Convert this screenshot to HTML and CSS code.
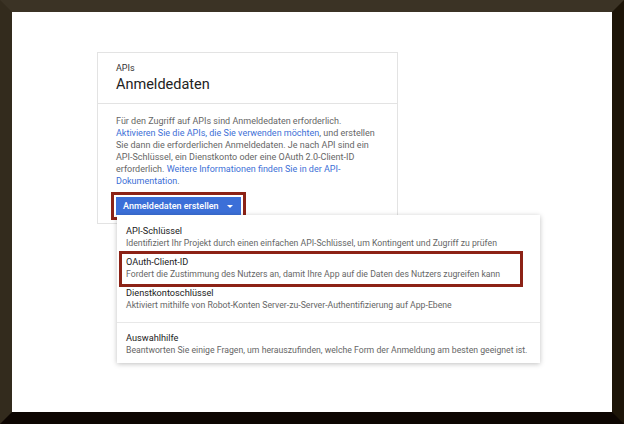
FILE: index.html
```
<!DOCTYPE html>
<html lang="de">
<head>
    <meta charset="UTF-8">
    <title>Anmeldedaten</title>
    <link rel="stylesheet" href="styles.css">
</head>
<body>
    <div class="frame">
        <div class="card">
            <div class="card-head">
                <div class="kicker">APIs</div>
                <div class="title">Anmeldedaten</div>
            </div>
            <div class="card-body">
                <p class="intro">Für den Zugriff auf APIs sind Anmeldedaten erforderlich. <a href="#">Aktivieren Sie die APIs, die Sie verwenden möchten</a>, und erstellen Sie dann die erforderlichen Anmeldedaten. Je nach API sind ein API-Schlüssel, ein Dienstkonto oder eine OAuth 2.0-Client-ID erforderlich. <a href="#">Weitere Informationen finden Sie in der API-Dokumentation</a>.</p>
                <div class="create-wrap">
                    <button class="create-btn">Anmeldedaten erstellen <span class="caret"></span></button>
                    <div class="menu">
                        <div class="menu-group">
                            <div class="menu-item">
                                <div class="item-title">API-Schlüssel</div>
                                <div class="item-desc">Identifiziert Ihr Projekt durch einen einfachen API-Schlüssel, um Kontingent und Zugriff zu prüfen</div>
                            </div>
                            <div class="menu-item marked">
                                <div class="item-title">OAuth-Client-ID</div>
                                <div class="item-desc">Fordert die Zustimmung des Nutzers an, damit Ihre App auf die Daten des Nutzers zugreifen kann</div>
                            </div>
                            <div class="menu-item">
                                <div class="item-title">Dienstkontoschlüssel</div>
                                <div class="item-desc">Aktiviert mithilfe von Robot-Konten Server-zu-Server-Authentifizierung auf App-Ebene</div>
                            </div>
                        </div>
                        <div class="menu-group last">
                            <div class="menu-item">
                                <div class="item-title">Auswahlhilfe</div>
                                <div class="item-desc">Beantworten Sie einige Fragen, um herauszufinden, welche Form der Anmeldung am besten geeignet ist.</div>
                            </div>
                        </div>
                    </div>
                </div>
            </div>
        </div>
    </div>
</body>
</html>
```

FILE: styles.css
```
html, body {
    margin: 0;
    padding: 0;
    background: #fff;
    font-family: Roboto, "Liberation Sans", Arial, sans-serif;
}
.frame {
    width: 624px;
    height: 424px;
    box-sizing: border-box;
    border-style: solid;
    border-width: 12px;
    border-top-color: #3b3325;
    border-left-color: #332b1d;
    border-right-color: #1d1508;
    border-bottom-color: #0d0602;
    background: #fff;
    overflow: hidden;
}
.card {
    width: 301px;
    box-sizing: border-box;
    margin: 40px 0 0 85px;
    border: 1px solid #e3e3e3;
    background: #fff;
}
.card-head {
    padding: 9px 18px 9px;
    border-bottom: 1px solid #e3e3e3;
}
.kicker {
    font-size: 9px;
    line-height: 12px;
    color: #333;
}
.title {
    font-size: 14.5px;
    line-height: 18px;
    color: #222;
    margin-top: 2px;
}
.card-body {
    padding: 11px 18px 8px;
}
.intro {
    margin: 0;
    font-size: 9px;
    line-height: 12px;
    color: #666;
}
.intro a {
    color: #3d6fd6;
    text-decoration: none;
}
.create-wrap {
    position: relative;
    margin-top: 10px;
    display: inline-block;
}
.create-btn {
    display: flex;
    align-items: center;
    gap: 8px;
    height: 18px;
    padding: 0 8px 0 7px;
    border: none;
    border-radius: 0;
    background: #3b6fd8;
    color: #fff;
    font-family: inherit;
    font-size: 9px;
    font-weight: 500;
    outline: 3px solid #8c2216;
    outline-offset: 2px;
}
.caret {
    width: 0;
    height: 0;
    border-left: 3px solid transparent;
    border-right: 3px solid transparent;
    border-top: 3px solid #fff;
}
.menu {
    position: absolute;
    left: 1px;
    top: 100%;
    width: 423px;
    padding-top: 6px;
    background: #fff;
    box-shadow: 0 1px 5px rgba(0, 0, 0, 0.25);
    z-index: 2;
}
.menu-group {
    padding-bottom: 8px;
    border-bottom: 1px solid #e8e8e8;
}
.menu-group.last {
    padding: 5px 0 4px;
    border-bottom: none;
}
.menu-item {
    position: relative;
    padding: 4px 9px 3px;
}
.menu-item.marked::after {
    content: "";
    position: absolute;
    left: 2px;
    right: 17px;
    top: -1px;
    bottom: -4px;
    border: 3px solid #8c2216;
}
.item-title {
    font-size: 9.2px;
    line-height: 12px;
    color: #222;
}
.item-desc {
    font-size: 8.7px;
    line-height: 12px;
    color: #666;
    white-space: nowrap;
}
```
